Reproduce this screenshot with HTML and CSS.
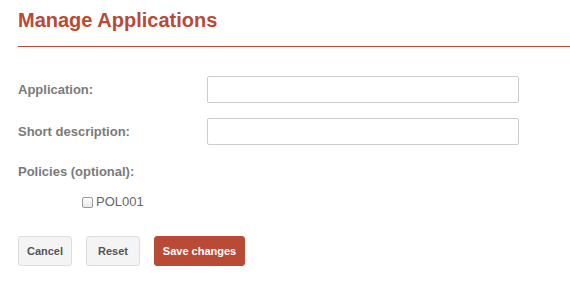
FILE: index.html
```html
<!DOCTYPE html>
<html>
<head>
<meta charset="utf-8">
<link rel="stylesheet" href="styles.css">
</head>
<body>
<div class="page">
  <h1 class="title">Manage Applications</h1>
  <form class="form">
    <div class="row">
      <label class="label">Application:</label>
      <input class="input" type="text">
    </div>
    <div class="row">
      <label class="label">Short description:</label>
      <input class="input" type="text">
    </div>
    <div class="row row-plain">
      <label class="label">Policies (optional):</label>
    </div>
    <div class="checks">
      <label class="check"><span class="box"></span>POL001</label>
    </div>
    <div class="actions">
      <button type="button" class="btn">Cancel</button>
      <button type="button" class="btn">Reset</button>
      <button type="button" class="btn btn-primary">Save changes</button>
    </div>
  </form>
</div>
</body>
</html>
```
FILE: styles.css
```css
html, body {
  margin: 0;
  padding: 0;
  background: #fff;
}
body {
  font-family: "Liberation Sans", Arial, sans-serif;
}
.page {
  padding: 8px 0 0 18px;
}
.title {
  margin: 0;
  font-size: 20px;
  line-height: 24px;
  font-weight: bold;
  color: #b94a36;
  padding-bottom: 14px;
  border-bottom: 1px solid #b94a36;
}
.form {
  display: flex;
  flex-direction: column;
  margin-top: 29px;
  width: 520px;
}
.row {
  display: flex;
  align-items: center;
  height: 27px;
  margin-bottom: 15px;
}
.label {
  width: 189px;
  font-size: 13px;
  line-height: 16px;
  font-weight: bold;
  color: #7a7a7a;
}
.input {
  box-sizing: border-box;
  width: 312px;
  height: 27px;
  border: 1px solid #ccc;
  border-radius: 2px;
  margin: 0;
  padding: 0 6px;
  background: #fff;
}
.row-plain {
  height: 16px;
  margin-top: 4px;
  margin-bottom: 14px;
}
.checks {
  padding-left: 64px;
  height: 16px;
  display: flex;
  align-items: center;
}
.check {
  display: flex;
  align-items: center;
  font-size: 13px;
  line-height: 16px;
  color: #666;
}
.box {
  box-sizing: border-box;
  width: 11px;
  height: 11px;
  border: 1px solid #999;
  border-radius: 2px;
  background: linear-gradient(#fff, #e8e8e8);
  margin-right: 3px;
}
.actions {
  display: flex;
  gap: 14px;
  margin-top: 26px;
}
.btn {
  box-sizing: border-box;
  height: 30px;
  width: 54px;
  padding: 0;
  font-family: "Liberation Sans", Arial, sans-serif;
  font-size: 11px;
  font-weight: bold;
  color: #555;
  background: #f4f4f4;
  border: 1px solid #ddd;
  border-radius: 3px;
}
.btn-primary {
  width: 91px;
  background: #b94a36;
  border-color: #b94a36;
  color: #fff;
}
```
